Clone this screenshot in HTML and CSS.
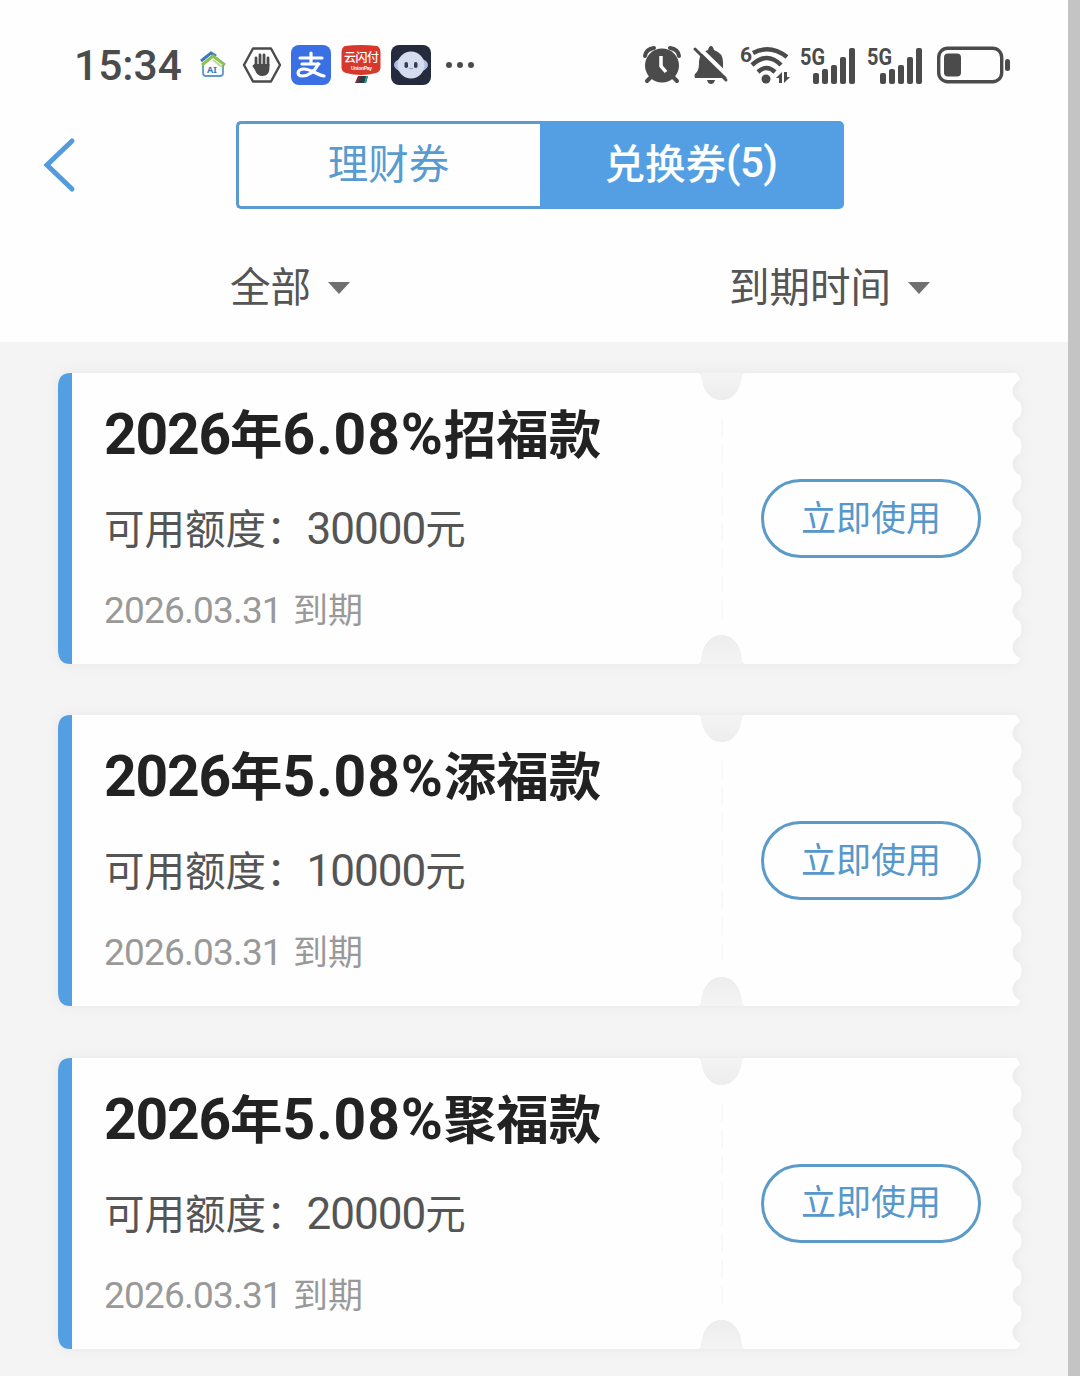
FILE: index.html
```html
<!DOCTYPE html>
<html lang="zh-CN">
<head>
  <meta charset="UTF-8">
  <meta name="viewport" content="width=device-width, initial-scale=1.0">
  <title>兑换券</title>
  <link rel="stylesheet" href="styles.css">
</head>
<body>
  <!-- shared shapes -->
  <svg class="defs" width="0" height="0">
    <linearGradient id="notch-top" x1="0" y1="0" x2="0" y2="1">
      <stop offset="0" stop-color="#f4f4f4"/>
      <stop offset="1" stop-color="#ededed"/>
    </linearGradient>
    <linearGradient id="notch-bottom" x1="0" y1="0" x2="0" y2="1">
      <stop offset="0" stop-color="#ededed"/>
      <stop offset="1" stop-color="#f4f4f4"/>
    </linearGradient>
    <symbol id="ticket" viewBox="0 0 964 291" overflow="visible">
      <path class="ticket-paper" d="M12 0H640Q643 0 643.500 4C645 18 653 27 663.500 27S682 18 683.500 4Q684 0 687 0H958Q961 3 962 7c-10 5-10 17 0 22q3 7 0 14.600c-10 5-10 17 0 22q3 7 0 14.600c-10 5-10 17 0 22q3 7 0 14.600c-10 5-10 17 0 22q3 7 0 14.600c-10 5-10 17 0 22q3 7 0 14.600c-10 5-10 17 0 22q3 7 0 14.600c-10 5-10 17 0 22q3 7 0 14.600c-10 5-10 17 0 22Q962 289 958 291H687Q684 291 683.500 285C682 271 674 262 663.500 262S645 271 643.500 285Q643 291 640 291H12Q0 291 0 279V12Q0 0 12 0Z"/>
      <path fill="url(#notch-top)" d="M643 0C645 18 653 27 663.500 27S682 18 684 0Z"/>
      <path fill="url(#notch-bottom)" d="M643 291C645 271 653 262 663.500 262S682 271 684 291Z"/>
      <path fill="#549fe2" d="M14 0H12Q0 0 0 14V277Q0 291 12 291H14Z"/>
      <path stroke="#f9f9f9" stroke-width="2" stroke-dasharray="18 8" d="M664 46V248"/>
    </symbol>
    <symbol id="bars" viewBox="0 0 58 40">
      <g fill="#4b4b4b">
        <rect x="13" y="28" width="6" height="11" rx="2"/>
        <rect x="22" y="24" width="6" height="15" rx="2"/>
        <rect x="31" y="20" width="6" height="19" rx="2"/>
        <rect x="40" y="12" width="6" height="27" rx="2"/>
        <rect x="49" y="3" width="6" height="36" rx="2"/>
      </g>
    </symbol>
  </svg>

  <div class="page">
    <header class="header">
      <div class="status-bar">
        <span class="time">15:34</span>
        <div class="apps">
          <svg class="app-home" width="28" height="28" viewBox="0 0 28 28" fill="none">
            <path d="M4 13V22Q4 25 7 25H21Q24 25 24 22V12" stroke="#5f9bc4" stroke-width="1.800"/>
            <path d="M2 10L12 2L17 5" stroke="#3d78b8" stroke-width="3"/>
            <path d="M3 14L14 5L26 14" stroke="#8cc152" stroke-width="3"/>
            <path d="M14 9L23 16" stroke="#b9dc8c" stroke-width="2"/>
            <text class="home-text" x="8" y="22">AI</text>
          </svg>
          <svg class="app-hand" width="40" height="38" viewBox="0 0 40 38">
            <path d="M11 2.500H29L38 19L29 35.500H11L2 19Z" fill="none" stroke="#4b4b4b" stroke-width="2.400" stroke-linejoin="round"/>
            <path d="M14 20V12M18 19V9M22 19V9M26 20V12M12 20L15 24" stroke="#4b4b4b" stroke-width="2.800" stroke-linecap="round"/>
            <path d="M12.600 18H27.400V23Q27 30 20.500 30Q15 30 13 24L11 20Z" fill="#4b4b4b"/>
          </svg>
          <svg class="app-pay" width="40" height="40" viewBox="0 0 40 40">
            <rect width="40" height="40" rx="8" fill="#3b70e4"/>
            <g fill="none" stroke="#fff" stroke-width="3.200" stroke-linecap="round">
              <path d="M9 13H31M20 8V18M11 19H28"/>
              <path d="M27 19C24 27 17 31 11 31C5 31 6 24 13 24C20 24 26 30 33 31"/>
            </g>
          </svg>
          <svg class="app-union" width="40" height="40" viewBox="0 0 40 40">
            <path d="M4 1Q20-1 36 1Q39 2 39.500 7V23Q39 27 35 28Q20 32 5 28Q1 27 .5 23V7Q1 2 4 1Z" fill="#d8372c"/>
            <text class="union-text" x="3" y="17" textLength="35">云闪付</text>
            <text class="union-sub" x="10" y="25" textLength="21">UnionPay</text>
            <path d="M17 31H22L19 38H14Z" fill="#7d2a32"/>
            <path d="M20 31H27L25 38H17Z" fill="#263e4a"/>
            <path d="M25 31H27L25 38H23Z" fill="#2b9b84"/>
          </svg>
          <svg class="app-robot" width="40" height="40" viewBox="0 0 40 40">
            <rect width="40" height="40" rx="8" fill="#252b3c"/>
            <ellipse cx="20" cy="20" rx="17" ry="8" fill="#a9bbe8"/>
            <circle cx="20" cy="20" r="13.500" fill="#d5dcef"/>
            <rect x="13.500" y="17" width="3.500" height="6" rx="1.700" fill="#333c50"/>
            <rect x="23" y="17" width="3.500" height="6" rx="1.700" fill="#333c50"/>
            <path d="M18 23Q20 25 22 23" fill="none" stroke="#8e9abb"/>
          </svg>
          <svg width="30" height="8" viewBox="0 0 30 8" fill="#4b4b4b">
            <circle cx="4" cy="4" r="3"/><circle cx="15" cy="4" r="3"/><circle cx="26" cy="4" r="3"/>
          </svg>
        </div>
        <div class="system">
          <svg class="alarm" width="38" height="38" viewBox="0 0 38 38">
            <circle cx="19" cy="19.500" r="17" fill="#4b4b4b"/>
            <path d="M2 10Q3 3 11 2M27 2Q35 3 36 10" fill="none" stroke="#4b4b4b" stroke-width="4" stroke-linecap="round"/>
            <path d="M8 31L4 35M30 31L34 35" stroke="#4b4b4b" stroke-width="4" stroke-linecap="round"/>
            <path d="M18 10V20L23 26" fill="none" stroke="#fff" stroke-width="3.500"/>
          </svg>
          <svg class="bell" width="38" height="40" viewBox="0 0 38 40">
            <path d="M3 33Q2 31 3 29Q7 26 7 19V16Q8 7 16 5Q17 1 19 1T22 5Q31 8 31 17V22Q31 27 36 30V33Z" fill="#4b4b4b"/>
            <path d="M15 35H23Q22 39 19 39T15 35Z" fill="#4b4b4b"/>
            <path d="M5 1L38 33" stroke="#fff" stroke-width="4"/>
            <path d="M3 4L34 35" stroke="#4b4b4b" stroke-width="3" stroke-linecap="round"/>
          </svg>
          <svg class="wifi" width="52" height="40" viewBox="0 0 52 40">
            <text class="signal-text wifi-text" x="1" y="17">6</text>
            <g fill="none" stroke="#4b4b4b" stroke-width="4.500">
              <path d="M14 8Q31-1 48 12"/>
              <path d="M13 20Q28 6 42 20"/>
              <path d="M19 27Q27.500 19 36 27"/>
            </g>
            <circle cx="27" cy="34" r="4.500" fill="#4b4b4b"/>
            <path d="M37 33L43 27V38H40V33ZM45 27V38L51 32H48V27Z" fill="#4b4b4b"/>
          </svg>
          <svg class="signal" width="58" height="40" viewBox="0 0 58 40">
            <text class="signal-text" x="0" y="20" textLength="25" lengthAdjust="spacingAndGlyphs">5G</text>
            <use href="#bars"/>
          </svg>
          <svg class="signal" width="58" height="40" viewBox="0 0 58 40">
            <text class="signal-text" x="0" y="20" textLength="25" lengthAdjust="spacingAndGlyphs">5G</text>
            <use href="#bars"/>
          </svg>
          <svg class="battery" width="74" height="38" viewBox="0 0 74 38">
            <rect x="1.700" y="2.200" width="63" height="33.600" rx="9" fill="none" stroke="#4b4b4b" stroke-width="3.400"/>
            <rect x="7" y="7.500" width="17" height="23" rx="4" fill="#4b4b4b"/>
            <rect x="68" y="13" width="5" height="12" rx="2.500" fill="#4b4b4b"/>
          </svg>
        </div>
      </div>

      <div class="nav">
        <svg class="back" width="34" height="56" viewBox="0 0 34 56">
          <path d="M30 4L5 28L30 52" fill="none" stroke="#549bdd" stroke-width="5" stroke-linecap="round"/>
        </svg>
        <div class="tabs">
          <div class="tab">理财券</div>
          <div class="tab active">兑换券<span class="num">(5)</span></div>
        </div>
      </div>

      <div class="filters">
        <div class="filter">全部<span class="arrow"></span></div>
        <div class="filter">到期时间<span class="arrow"></span></div>
      </div>
    </header>

    <main class="coupons">
      <div class="coupon">
        <svg class="coupon-bg" width="964" height="291"><use href="#ticket"/></svg>
        <div class="coupon-body">
          <div class="info">
            <h2><span class="num">2026</span>年<span class="num rate">6.08%</span>招福款</h2>
            <p class="amount">可用额度：<span class="num">30000</span>元</p>
            <p class="date"><span class="num">2026.03.31</span>到期</p>
          </div>
          <button class="use-btn">立即使用</button>
        </div>
      </div>
      <div class="coupon">
        <svg class="coupon-bg" width="964" height="291"><use href="#ticket"/></svg>
        <div class="coupon-body">
          <div class="info">
            <h2><span class="num">2026</span>年<span class="num rate">5.08%</span>添福款</h2>
            <p class="amount">可用额度：<span class="num">10000</span>元</p>
            <p class="date"><span class="num">2026.03.31</span>到期</p>
          </div>
          <button class="use-btn">立即使用</button>
        </div>
      </div>
      <div class="coupon">
        <svg class="coupon-bg" width="964" height="291"><use href="#ticket"/></svg>
        <div class="coupon-body">
          <div class="info">
            <h2><span class="num">2026</span>年<span class="num rate">5.08%</span>聚福款</h2>
            <p class="amount">可用额度：<span class="num">20000</span>元</p>
            <p class="date"><span class="num">2026.03.31</span>到期</p>
          </div>
          <button class="use-btn">立即使用</button>
        </div>
      </div>
    </main>
  </div>
</body>
</html>
```
FILE: styles.css
```css
* {
  box-sizing: border-box;
}

body {
  margin: 0;
  height: 1376px;
  overflow: hidden;
  background: #f4f4f4;
  font-family: "Noto Sans CJK SC", sans-serif;
}

svg {
  overflow: visible;
}

.defs {
  display: block;
}

.page {
  height: 1376px;
  border-right: 12px solid #c4c4c4;
}

.header {
  height: 342px;
  background: #fefefe;
}

.num {
  font-family: Roboto, sans-serif;
  line-height: 0;
}

/* status bar */
.status-bar {
  display: flex;
  align-items: flex-start;
  height: 121px;
  padding: 0 57px 0 74px;
}

.time {
  width: 125px;
  margin-top: 41px;
  font-family: Roboto, sans-serif;
  font-size: 42.5px;
  font-weight: 500;
  line-height: 50px;
  color: #4b4b4b;
}

.apps,
.system {
  display: flex;
  align-items: center;
  height: 40px;
  margin-top: 45px;
}

.app-hand {
  margin-left: 15px;
}

.app-pay {
  margin-left: 9px;
}

.app-union,
.app-robot {
  margin-left: 10px;
}

.app-robot + svg {
  margin-left: 14px;
}

.system {
  margin-left: auto;
}

.bell {
  margin-left: 11px;
}

.wifi,
.signal {
  margin-left: 9px;
}

.battery {
  margin-left: 12px;
}

.home-text {
  font: bold 9px "Noto Sans", sans-serif;
  fill: #3d78b8;
}

.union-text {
  font: 500 12px "Noto Sans CJK SC", sans-serif;
  fill: #fff;
}

.union-sub {
  font: bold 5px "Liberation Sans", sans-serif;
  fill: #fff;
}

.signal-text {
  font: bold 24px Roboto, sans-serif;
  fill: #4b4b4b;
}

.wifi-text {
  font-size: 21px;
}

/* tabs */
.nav {
  display: flex;
  align-items: center;
  height: 88px;
}

.back {
  margin-left: 42px;
}

.tabs {
  display: flex;
  width: 608px;
  height: 88px;
  margin-left: 160px;
}

.tab {
  width: 304px;
  padding-right: 2px;
  border: 3px solid #5c9bcf;
  border-right: 0;
  border-radius: 5px 0 0 5px;
  font-size: 40.5px;
  line-height: 76px;
  text-align: center;
  color: #579bd0;
}

.tab.active {
  border: 3px solid #549fe4;
  border-radius: 0 5px 5px 0;
  background: #549fe4;
  color: #fff;
  font-weight: 500;
}

.tab .num {
  position: relative;
  top: -2px;
  font-size: 42px;
  letter-spacing: -0.5px;
}

.filters {
  display: flex;
  gap: 379px;
  padding: 45px 0 0 230px;
}

.filter {
  display: flex;
  align-items: center;
  height: 60px;
  font-size: 40.5px;
  color: #555;
}

.arrow {
  margin: 7px 0 0 17px;
  border: 11px solid transparent;
  border-top: 12px solid #707070;
  border-bottom: 0;
}

/* coupons */
.coupons {
  display: flex;
  flex-direction: column;
  gap: 51.3px;
  padding: 31px 46px 0 58px;
}

.coupon {
  display: grid;
  width: 964px;
  height: 291px;
}

.coupon-bg,
.coupon-body {
  grid-area: 1 / 1;
}

.coupon-bg {
  filter: drop-shadow(0 0 6px rgba(0, 0, 0, 0.05));
}

.ticket-paper {
  fill: #fefefe;
}

.coupon-body {
  z-index: 1;
  display: flex;
  align-items: center;
  padding: 0 41px 0 46px;
}

.info {
  width: 657px;
  height: 291px;
  padding-top: 18px;
}

.info h2 {
  margin: 0;
  font-size: 52.5px;
  font-weight: 700;
  line-height: 80px;
  color: #222;
}

.info h2 .num {
  font-size: 57px;
  letter-spacing: -1.2px;
}

.info h2 .rate {
  letter-spacing: 0.9px;
}

.amount {
  margin: 26px 0 0;
  font-size: 40.5px;
  line-height: 60px;
  color: #555;
}

.amount .num {
  font-size: 44px;
  letter-spacing: -1px;
}

.date {
  margin: 26px 0 0;
  font-size: 35px;
  line-height: 50px;
  color: #999;
}

.date .num {
  margin-right: 11px;
  font-size: 37px;
  letter-spacing: -0.8px;
}

.use-btn {
  width: 220px;
  height: 79px;
  padding: 0 0 7px;
  border: 3px solid #5c9bc8;
  border-radius: 40px;
  background: transparent;
  font-family: inherit;
  font-size: 35px;
  color: #5798cc;
}
```
